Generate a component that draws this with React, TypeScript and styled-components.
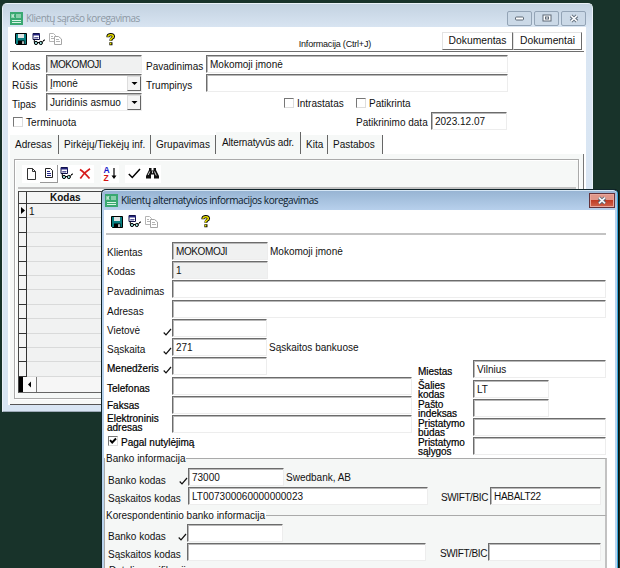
import React from 'react';
import styled, { createGlobalStyle, css } from 'styled-components';

const Global = createGlobalStyle`
  * { box-sizing: border-box; }
  html, body { margin: 0; padding: 0; }
  body { background: #18332a; overflow: hidden; }
`;

const Desktop = styled.div`
  position: relative;
  width: 620px;
  height: 568px;
  overflow: hidden;
  background: #18332a;
  font: 10px/12px "Liberation Sans", Arial, sans-serif;
  color: #111;
  white-space: nowrap;
`;

/* ---------- windows ---------- */
const BackWindow = styled.section`
  position: absolute;
  left: 2px;
  top: 3px;
  width: 591px;
  height: 409px;
  padding: 0 6px 6px 5px;
  background: linear-gradient(#c3d2e1, #dae6f3 25px, #d8e5f3);
  border: 1px solid #eaf1f8;
  border-bottom-color: #9eabb8;
  border-radius: 5px 5px 0 0;
`;

const FrontWindow = styled.section`
  position: absolute;
  left: 101px;
  top: 189px;
  width: 517px;
  height: 420px;
  padding: 0 2px 0 2px;
  background: linear-gradient(#96b3d2, #b7d0ec 20px, #b9d4ee);
  border: 1px solid #10252a;
  border-right-color: #35a5d8;
  border-radius: 5px 5px 0 0;
  box-shadow: inset 0 1px #d5e6f5, 1px 0 #07120f;
`;

const TitleBar = styled.header<{ $front?: boolean }>`
  display: flex;
  align-items: center;
  height: ${p => (p.$front ? 20 : 23)}px;
  padding-left: ${p => (p.$front ? 1 : 2)}px;
  gap: 3px;
  font: 10px/14px "Open Sans", "Noto Sans", sans-serif;
  color: ${p => (p.$front ? '#0c1a2c' : '#8d98a4')};
  letter-spacing: ${p => (p.$front ? '-0.43px' : '-0.53px')};
  ${p => !p.$front && css`padding-top: 5px;`}
`;

const Controls = styled.div`
  display: flex;
  gap: 2px;
  margin-left: auto;
`;

const ControlButton = styled.span<{ $close?: boolean }>`
  display: flex;
  align-items: center;
  justify-content: center;
  width: ${p => (p.$close ? 26 : 25)}px;
  height: 15px;
  border: 1px solid #93a4b6;
  border-radius: 2px;
  background: #cbd9e7;
  ${p => p.$close && css`
    border-color: #63323a;
    border-radius: 0;
    box-shadow: inset 0 0 0 1px #e9a79c;
    background: linear-gradient(#e0978a 45%, #c03c25 50%, #d0654d);
  `}
`;

const BackBody = styled.div`
  display: flex;
  flex-direction: column;
  height: 378px;
  background: #fff;
  padding: 0 2px;
`;

const FrontBody = styled.div`
  display: flex;
  flex-direction: column;
  height: 400px;
  background: #fff;
`;

/* ---------- toolbars ---------- */
const Toolbar = styled.div<{ $front?: boolean }>`
  display: flex;
  align-items: center;
  height: 25px;
  padding-left: 5px;
  border-bottom: ${p => (p.$front ? '2px solid #c3c3c3' : '1px solid #6e6e6e')};
  ${p => p.$front && css`margin: 0 9px 0 2px;`}
`;
const IconSlot = styled.span<{ $w: number }>`
  display: flex;
  width: ${p => p.$w}px;
`;
const InfoText = styled.span`
  margin: 9px 71px 0 auto;
  font-size: 9px;
  letter-spacing: -0.2px;
`;
const PushButton = styled.span<{ $w: number }>`
  display: flex;
  align-items: center;
  justify-content: center;
  width: ${p => p.$w}px;
  height: 18px;
  margin-top: 3px;
  border: 1px solid #e3e3e3;
  border-right-color: #6b6b6b;
  border-bottom-color: #6b6b6b;
  font-size: 10.3px;
`;

/* ---------- form parts ---------- */
const Row = styled.div<{ $h?: number; $indent?: number }>`
  display: flex;
  align-items: center;
  height: ${p => p.$h ?? 19}px;
  padding-left: ${p => p.$indent ?? 0}px;
`;
const Label = styled.span<{ $w?: number; $strong?: boolean; $drop?: number; $track?: number }>`
  flex: none;
  width: ${p => (p.$w ? `${p.$w}px` : 'auto')};
  margin-top: ${p => p.$drop ?? 2}px;
  letter-spacing: ${p => p.$track ?? 0}px;
  line-height: 12px;
  ${p => p.$strong && css`
    -webkit-text-stroke: 0.2px #000;
    color: #000;
    line-height: 9px;
    white-space: pre;
  `}
`;
const Field = styled.span<{ $w: number; $grey?: boolean; $track?: number }>`
  display: flex;
  align-items: flex-start;
  flex: none;
  align-self: flex-start;
  width: ${p => p.$w}px;
  height: 18px;
  padding: 3px 0 0 3px;
  border: 1px solid #ededed;
  border-top-color: #6c6c6c;
  border-left-color: #6c6c6c;
  box-shadow: inset 1px 1px #b8b8b8;
  background: ${p => (p.$grey ? '#f0f1f1' : '#fff')};
  letter-spacing: ${p => p.$track ?? 0}px;
`;
const DropButton = styled.span`
  display: flex;
  align-items: center;
  justify-content: center;
  width: 14px;
  height: 15px;
  margin: -2px 0 0 auto;
  border: 1px solid #ddd;
  border-right-color: #666;
  border-bottom-color: #666;
  background: #f4f4f4;
`;
const Box = styled.span`
  display: flex;
  flex: none;
  width: 10px;
  height: 10px;
  margin-right: 3px;
  border: 1px solid #ddd;
  border-top-color: #777;
  border-left-color: #777;
  background: #fff;
`;
const Gap = styled.span<{ $w: number }>`
  flex: none;
  width: ${p => p.$w}px;
`;
const Form = styled.div`
  height: 79px;
  padding: 3px 0 0 2px;
`;

/* ---------- tabs ---------- */
const Tabs = styled.nav`
  display: flex;
  align-items: flex-end;
  height: 23px;
`;
const Tab = styled.span<{ $w: number; $active?: boolean; $track?: number }>`
  width: ${p => p.$w}px;
  height: ${p => (p.$active ? 22 : 19)}px;
  padding: ${p => (p.$active ? '5px 0 0 6px' : '4px 0 0 5px')};
  border-right: 1px solid #666;
  background: #f6f8f7;
  letter-spacing: ${p => p.$track ?? 0}px;
`;
const TabPage = styled.div`
  height: 251px;
  padding: 5px 4px;
  background: #f6f8f7;
  border-right: 1px solid #777;
  border-bottom: 1px solid #555;
`;
const Groove = styled.div`
  height: 240px;
  padding: 0 2px 0 3px;
  border: 1px solid #aaa;
  box-shadow: inset 1px 1px #fff, 1px 1px #fff;
`;
const GridTools = styled.div`
  display: flex;
  align-items: center;
  height: 29px;
  padding-left: 4px;
  border-bottom: 2px solid #c3c3c3;
`;
const Tool = styled.span<{ $raised?: boolean; $after?: number }>`
  display: flex;
  align-items: center;
  justify-content: center;
  width: 18px;
  height: 18px;
  margin-right: ${p => p.$after ?? 0}px;
  background: #fff;
  ${p => p.$raised && css`border-right: 1px solid #999; border-bottom: 1px solid #999;`}
`;
const Grid = styled.div`
  display: grid;
  grid-template-columns: 8px 1fr;
  grid-template-rows: 12px repeat(12, 14.4px) 15px;
  height: 202px;
  margin-top: 2px;
  border: 1px solid #444;
  border-bottom: 1px solid #666;
  overflow: hidden;
`;
const Mark = styled.span`
  display: flex;
  align-items: center;
  justify-content: flex-end;
  background: #f3f4f4;
  border-right: 1px solid #333;
  border-bottom: 1px solid #333;
`;
const HeadCell = styled.span`
  padding-left: 23px;
  background: #f4f5f5;
  border-bottom: 1px solid #444;
  font-weight: 700;
  line-height: 12px;
`;
const Cell = styled.span`
  padding-left: 2px;
  background: #f1f2f2;
  border-bottom: 1px solid #d9dada;
  line-height: 15px;
`;
const ScrollRow = styled.span`
  display: flex;
  grid-column: 1 / 3;
  background: #f6f6f6;
  border-left: 4px solid #000;
`;
const ScrollButton = styled.span`
  display: flex;
  align-items: center;
  justify-content: center;
  width: 14px;
  border-right: 1px solid #777;
  background: #fafafa;
`;

/* ---------- front window layout ---------- */
const Details = styled.div`
  padding: 7px 0 0 3px;
  height: 223px;
`;
const Split = styled.div`
  display: flex;
`;
const LeftPart = styled.div`
  width: 311px;
`;
const RightPart = styled.div`
  padding-top: 41px;
`;
const Group = styled.fieldset<{ $h: number; $top: number }>`
  position: relative;
  width: 503px;
  height: ${p => p.$h}px;
  min-width: 0;
  margin: 0;
  padding: ${p => p.$top}px 0 0 3px;
  background: #f5f7f6;
  border: 1px solid #aaa;
  border-right: 2px solid #c2c2c2;
  border-bottom: 0;
`;
const GroupTitle = styled.span`
  position: absolute;
  left: 0;
  top: -6px;
  padding: 0 1px;
  background: linear-gradient(#fff 50%, #f5f7f6 50%);
`;

/* ---------- icons ---------- */
const AppIcon = () => (
  <svg width="13" height="13" viewBox="0 0 13 13">
    <rect width="13" height="13" fill="#39a871" />
    <path d="M2 2v4M2 4h1l1-2M3 4l1.2 2M6 3h5M6 5h5M2 8.5h9M2 10.5h9" stroke="#d9f4e5" fill="none" />
  </svg>
);
const SaveIcon = () => (
  <svg width="12" height="12" viewBox="0 0 12 12">
    <path d="M.5.5h11v11h-10l-1-1z" fill="#087e80" stroke="#000" />
    <path d="M3 1h6v4H3z" fill="#dfe5e5" />
    <path d="M3 7.5h6.5V11H3z" fill="#000" />
    <path d="M7.3 8.3h1.4V11H7.3z" fill="#fff" />
  </svg>
);
const ViewIcon = () => (
  <svg width="14" height="13" viewBox="0 0 14 13">
    <path d="M1 .5h6.5v6H1z" fill="#fff" stroke="#101048" />
    <path d="M1 1h7v1.5H1z" fill="#24247c" />
    <path d="M2.5 4.5h4M3 6V4M5 6V4" stroke="#44448f" strokeWidth=".8" />
    <circle cx="4" cy="10" r="1.6" fill="#9ce0dd" stroke="#000" />
    <circle cx="8.8" cy="10" r="1.6" fill="#9ce0dd" stroke="#000" />
    <path d="M5.5 9.5h2M2.3 9.5V6.5M10.3 9.5L12 6.8l1 .7" stroke="#000" fill="none" />
  </svg>
);
const CopyIcon = () => (
  <svg width="13" height="12" viewBox="0 0 13 12">
    <path d="M.5.5h4l2 2v6h-6zM2 3.5h2M2 5.5h3" fill="#fff" stroke="#b4b4b4" />
    <path d="M5.5 3.5h4l3 2.5v5.5h-7z" fill="#fff" stroke="#a5a5a5" />
    <path d="M7 6.5h3M7 8.5h4" stroke="#b4b4b4" />
  </svg>
);
const HelpIcon = () => (
  <svg width="10" height="13" viewBox="0 0 10 13">
    <path d="M2 4.2V3.2Q2.4 1.6 4.8 1.6T7.5 3.4Q7.5 4.6 5.8 5.5Q4.9 6.1 4.9 7.8M4.9 9.3v3" fill="none" stroke="#000" strokeWidth="3.1" />
    <path d="M2 3.7V3.2Q2.4 1.7 4.8 1.7T7.3 3.4Q7.3 4.5 5.6 5.4Q4.6 6 4.6 7.4M4.6 9.8v1.8" fill="none" stroke="#efe400" strokeWidth="1.6" />
  </svg>
);
const NewIcon = () => (
  <svg width="11" height="12" viewBox="0 0 11 12">
    <path d="M1.5.5h5l3 3v8h-8z" fill="#fff" stroke="#333" />
    <path d="M6.5.5v3h3" fill="none" stroke="#333" />
  </svg>
);
const EditIcon = () => (
  <svg width="10" height="11" viewBox="0 0 10 11">
    <path d="M1.5.5h5l2 2v7h-7z" fill="#fff" stroke="#222" />
    <path d="M3 3.5h3M3 5.5h4M3 7.5h4" stroke="#262688" />
  </svg>
);
const DeleteIcon = () => (
  <svg width="12" height="12" viewBox="0 0 12 12">
    <path d="M1 1.5Q5 4 10.5 10.5M11 .8Q5 4.5 1.3 10.5" fill="none" stroke="#d61c1c" strokeWidth="1.7" />
  </svg>
);
const SortLetters = styled.span`
  display: grid;
  width: 7px;
  font: 700 8.5px/8px "Liberation Sans", sans-serif;
`;
const SortLetter = styled.span<{ $red?: boolean }>`
  height: 8px;
  color: ${p => (p.$red ? '#d41414' : '#1616c8')};
`;
const SortArrow = () => (
  <svg width="6" height="12" viewBox="0 0 6 12">
    <path d="M3 0v9" stroke="#000" strokeWidth="1.2" />
    <path d="M.5 7.5h5L3 11z" />
  </svg>
);
const OkIcon = () => (
  <svg width="13" height="11" viewBox="0 0 13 11">
    <path d="M.8 6L4.3 9.5L12 1" fill="none" stroke="#000" strokeWidth="1.5" />
  </svg>
);
const FindIcon = () => (
  <svg width="13" height="11" viewBox="0 0 13 11">
    <path d="M3 0h2.5v2.5h2V0H10v2l3 6v2.5H8V6.5H5v4H0V8l3-6z" fill="#111" />
    <path d="M3.8 3.5L2.2 7M8.5 3.5l1.7 4M6.5 3.2v2" stroke="#fff" strokeWidth=".8" />
  </svg>
);
const TickSvg = styled.svg`
  flex: none;
  align-self: flex-start;
  width: 9px;
  height: 8px;
  margin-top: 9px;
`;
const Tick = () => (
  <TickSvg viewBox="0 0 9 8">
    <path d="M.7 4.5L3 6.8L8 1" fill="none" stroke="#111" strokeWidth="1.2" />
  </TickSvg>
);
const BoxTick = () => (
  <svg width="8" height="8" viewBox="0 0 8 8">
    <path d="M1 3.2L3.2 5.5L7 1.5" fill="none" stroke="#000" strokeWidth="1.9" />
  </svg>
);
const Arrow = ({ dir }: { dir: 'down' | 'left' | 'right' }) => (
  <svg width="7" height="7" viewBox="0 0 7 7">
    <path d={dir === 'down' ? 'M.5 2h6L3.5 5z' : dir === 'left' ? 'M5 .5v6L2 3.5z' : 'M2 0v7l4-3.5z'} />
  </svg>
);
const Cross = () => (
  <svg width="10" height="9" viewBox="0 0 10 9">
    <path d="M2 1.7l6 5.6M8 1.7L2 7.3" stroke="#52606e" strokeWidth="3.5" />
    <path d="M2 1.7l6 5.6M8 1.7L2 7.3" stroke="#f5f7fa" strokeWidth="1.8" />
  </svg>
);

type LineProps = {
  label: string;
  w: number;
  h?: number;
  value?: string;
  tick?: boolean;
  grey?: boolean;
  strong?: boolean;
  note?: string;
  drop?: number;
  track?: number;
};
const DetailLine = ({ label, w, h, value, tick, grey, strong, note, drop, track }: LineProps) => (
  <Row $h={h}>
    <Label $w={tick ? 56 : 65} $strong={strong} $drop={drop}>{label}</Label>
    {tick && <Tick />}
    <Field $w={w} $grey={grey} $track={track}>{value}</Field>
    {note && <><Gap $w={2} /><Label $drop={0}>{note}</Label></>}
  </Row>
);

const ShortLine = ({ label, w, value, h, drop }: { label: string; w: number; value?: string; h?: number; drop?: number }) => (
  <Row $h={h}>
    <Label $w={55} $strong $drop={drop ?? 1} $track={-0.05}>{label}</Label>
    <Field $w={w}>{value}</Field>
  </Row>
);

const ListWindow = () => (
  <BackWindow>
    <TitleBar>
      <AppIcon />
      Klientų sąrašo koregavimas
      <Controls>
        <ControlButton><svg width="9" height="5"><rect x=".5" y="1" width="8" height="3" rx="1" fill="#fff" stroke="#5c6876" /></svg></ControlButton>
        <ControlButton><svg width="10" height="8"><rect x="1" y="1" width="8" height="6" fill="#fff" stroke="#5c6876" /><rect x="3.5" y="3" width="3" height="2" fill="none" stroke="#5c6876" /></svg></ControlButton>
        <ControlButton><Cross /></ControlButton>
      </Controls>
    </TitleBar>
    <BackBody>
      <Toolbar>
        <IconSlot $w={17}><SaveIcon /></IconSlot>
        <IconSlot $w={17}><ViewIcon /></IconSlot>
        <IconSlot $w={57}><CopyIcon /></IconSlot>
        <HelpIcon />
        <InfoText>Informacija (Ctrl+J)</InfoText>
        <PushButton $w={71}>Dokumentas</PushButton>
        <PushButton $w={69}>Dokumentai</PushButton>
        <Gap $w={2} />
      </Toolbar>
      <Form>
        <Row>
          <Label $w={34} $drop={5}>Kodas</Label>
          <Field $w={96} $grey $track={-0.4}>MOKOMOJI</Field>
          <Gap $w={4} />
          <Label $w={60} $drop={5}>Pavadinimas</Label>
          <Field $w={302}>Mokomoji įmonė</Field>
        </Row>
        <Row>
          <Label $w={34} $drop={5} $track={0.2}>Rūšis</Label>
          <Field $w={96}>Įmonė<DropButton><Arrow dir="down" /></DropButton></Field>
          <Gap $w={4} />
          <Label $w={60} $drop={5}>Trumpinys</Label>
          <Field $w={302} />
        </Row>
        <Row>
          <Label $w={34} $drop={5}>Tipas</Label>
          <Field $w={96} $track={0.1}>Juridinis asmuo<DropButton><Arrow dir="down" /></DropButton></Field>
          <Gap $w={142} />
          <Box /><Label $w={59} $drop={3}>Intrastatas</Label>
          <Box /><Label $drop={3}>Patikrinta</Label>
        </Row>
        <Row>
          <Gap $w={1} />
          <Box /><Label $w={330} $track={0.1} $drop={3}>Terminuota</Label>
          <Label $w={75} $drop={3}>Patikrinimo data</Label>
          <Field $w={76}>2023.12.07</Field>
        </Row>
      </Form>
      <Tabs>
        <Tab $w={49}>Adresas</Tab>
        <Tab $w={92}>Pirkėjų/Tiekėjų inf.</Tab>
        <Tab $w={65}>Grupavimas</Tab>
        <Tab $w={85} $active $track={-0.15}>Alternatyvūs adr.</Tab>
        <Tab $w={27}>Kita</Tab>
        <Tab $w={55}>Pastabos</Tab>
      </Tabs>
      <TabPage>
        <Groove>
          <GridTools>
            <Tool><NewIcon /></Tool>
            <Tool $raised><EditIcon /></Tool>
            <Tool><ViewIcon /></Tool>
            <Tool $after={7}><DeleteIcon /></Tool>
            <Tool $after={6}>
              <SortLetters><SortLetter>A</SortLetter><SortLetter $red>Z</SortLetter></SortLetters>
              <SortArrow />
            </Tool>
            <Tool><OkIcon /></Tool>
            <Tool><FindIcon /></Tool>
          </GridTools>
          <Grid>
            <Mark /><HeadCell>Kodas</HeadCell>
            {Array.from({ length: 12 }, (_, i) => (
              <React.Fragment key={i}>
                <Mark>{i === 0 && <Arrow dir="right" />}</Mark>
                <Cell>{i === 0 && '1'}</Cell>
              </React.Fragment>
            ))}
            <ScrollRow><ScrollButton><Arrow dir="left" /></ScrollButton></ScrollRow>
          </Grid>
        </Groove>
      </TabPage>
    </BackBody>
  </BackWindow>
);

const DetailWindow = () => (
  <FrontWindow>
    <TitleBar $front>
      <AppIcon />
      Klientų alternatyvios informacijos koregavimas
      <Controls><ControlButton $close><Cross /></ControlButton></Controls>
    </TitleBar>
    <FrontBody>
      <Toolbar $front>
        <IconSlot $w={17}><SaveIcon /></IconSlot>
        <IconSlot $w={17}><ViewIcon /></IconSlot>
        <IconSlot $w={56}><CopyIcon /></IconSlot>
        <HelpIcon />
      </Toolbar>
      <Details>
        <DetailLine label="Klientas" w={96} value="MOKOMOJI" grey note="Mokomoji įmonė" track={-0.4} />
        <DetailLine label="Kodas" w={96} value="1" grey />
        <DetailLine label="Pavadinimas" w={434} h={20} drop={4} />
        <DetailLine label="Adresas" w={434} drop={5} />
        <Split>
          <LeftPart>
            <DetailLine label="Vietovė" w={95} tick drop={4} />
            <DetailLine label="Sąskaita" w={95} tick value="271" note="Sąskaitos bankuose" drop={4} />
            <DetailLine label="Menedžeris" w={95} h={20} tick strong />
            <DetailLine label="Telefonas" w={240} strong drop={3} />
            <DetailLine label="Faksas" w={240} strong drop={-1} />
            <DetailLine label={'Elektroninis\nadresas'} w={240} strong drop={-4} />
            <Row $indent={1} $h={14}><Box><BoxTick /></Box><Label $strong $drop={2}>Pagal nutylėjimą</Label></Row>
          </LeftPart>
          <RightPart>
            <ShortLine label="Miestas" w={133} value="Vilnius" h={20} drop={3} />
            <ShortLine label={'Šalies\nkodas'} w={76} value="LT" />
            <ShortLine label={'Pašto\nindeksas'} w={76} drop={0} />
            <ShortLine label={'Pristatymo\nbūdas'} w={133} drop={0} />
            <ShortLine label={'Pristatymo\nsąlygos'} w={133} />
          </RightPart>
        </Split>
      </Details>
      <Group $h={57} $top={9}>
        <GroupTitle>Banko informacija</GroupTitle>
        <Row>
          <Label $w={71} $drop={7}>Banko kodas</Label><Tick />
          <Field $w={96}>73000</Field><Gap $w={2} /><Label $drop={0}>Swedbank, AB</Label>
        </Row>
        <Row>
          <Label $w={80} $drop={4}>Sąskaitos kodas</Label>
          <Field $w={240}>LT007300060000000023</Field><Gap $w={13} />
          <Label $w={49} $track={-0.4}>SWIFT/BIC</Label><Field $w={111} $track={-0.3}>HABALT22</Field>
        </Row>
      </Group>
      <Group $h={80} $top={8}>
        <GroupTitle>Korespondentinio banko informacija</GroupTitle>
        <Row>
          <Label $w={70} $drop={7}>Banko kodas</Label><Tick />
          <Field $w={96} />
        </Row>
        <Row>
          <Label $w={79} $drop={4}>Sąskaitos kodas</Label>
          <Field $w={239} /><Gap $w={14} />
          <Label $w={48} $track={-0.4}>SWIFT/BIC</Label><Field $w={113} />
        </Row>
        <Row $h={16} $indent={1}><Label $w={110}>Detali specifikacija</Label></Row>
      </Group>
    </FrontBody>
  </FrontWindow>
);

export default function App() {
  return (
    <>
      <Global />
      <Desktop>
        <ListWindow />
        <DetailWindow />
      </Desktop>
    </>
  );
}
